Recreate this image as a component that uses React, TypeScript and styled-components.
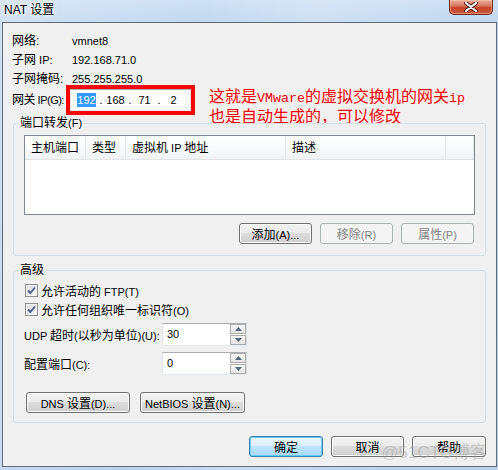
import React from "react";
import styled, { createGlobalStyle, css } from "styled-components";

const Global = createGlobalStyle`
  html, body { margin: 0; padding: 0; }
  body {
    font-family: "Liberation Sans", "Noto Sans CJK SC", sans-serif;
    font-size: 12px;
    color: #000;
    background: #fff;
  }
`;

/* ---------- window chrome ---------- */

const Frame = styled.div`
  width: 498px;
  height: 470px;
  box-sizing: border-box;
  padding: 0 1px 3px 2px;
  display: flex;
  flex-direction: column;
  overflow: hidden;
  background:
    linear-gradient(100deg, rgba(255,255,255,0.25) 0%, rgba(255,255,255,0) 35%, rgba(255,255,255,0.2) 55%, rgba(255,255,255,0) 80%),
    linear-gradient(180deg, #cfe0f3 0%, #c2d7ee 22px, #bcd3eb 100%);
`;

const TitleBar = styled.div`
  height: 22px;
  display: flex;
  justify-content: space-between;
  align-items: flex-start;
`;

const Title = styled.div`
  padding-left: 2px;
  line-height: 21px;
  font-size: 12px;
  font-family: "Liberation Sans", "Noto Sans CJK SC", sans-serif;
  text-shadow: 0 0 6px #fff, 0 0 3px #fff;
`;

const CloseButton = styled.div`
  width: 44px;
  height: 15px;
  box-sizing: border-box;
  margin-right: 4px;
  border: 1px solid #6e2d22;
  border-top: none;
  border-radius: 0 0 5px 5px;
  background: linear-gradient(180deg, #eab0a2 0%, #da7862 40%, #c6452c 55%, #cf5a3e 100%);
  box-shadow: inset 0 0 0 1px rgba(255, 200, 180, 0.45);
  display: flex;
  align-items: center;
  justify-content: center;
`;

const Client = styled.div`
  flex: 1;
  position: relative;
  display: flex;
  flex-direction: column;
  border: 1px solid #5f6b78;
  background: #f0f0f0;
`;

/* ---------- mixed latin / cjk text ---------- */

const Lat = styled.span`
  font-size: 11px;
`;

const MonoLat = styled.span`
  font-family: "Liberation Mono", monospace;
  font-size: 13.33px;
`;

function Mixed({ text, as: Latin = Lat }: { text: string; as?: typeof Lat }) {
  const parts = text.match(/[\x00-\x7f]+|[^\x00-\x7f]+/g) ?? [];
  return (
    <>
      {parts.map((p, i) =>
        /^[\x00-\x7f]/.test(p) ? <Latin key={i}>{p}</Latin> : <React.Fragment key={i}>{p}</React.Fragment>
      )}
    </>
  );
}

/* ---------- network info ---------- */

const InfoGrid = styled.div`
  display: grid;
  grid-template-columns: 54px 1fr;
  grid-template-rows: 19px 19px 15px 30px;
  padding: 9px 0 0 9px;
  align-items: start;
  line-height: 18px;
`;

const InfoLabel = styled.div<{ $center?: boolean }>`
  white-space: nowrap;
  ${(p) =>
    p.$center &&
    css`
      align-self: center;
      letter-spacing: -0.5px;
    `}
`;

const InfoValue = styled.div`
  padding-left: 6px;
  font-size: 11px;
`;

const GatewayCell = styled.div`
  display: flex;
  align-items: flex-start;
  gap: 14px;
`;

const RedFrame = styled.div`
  border: 4px solid #ff0000;
`;

const IpField = styled.div`
  width: 121px;
  height: 22px;
  box-sizing: border-box;
  background: #fff;
  border: 1px solid;
  border-color: #abadb3 #dbdfe6 #e3e9ef #e2e3ea;
  display: flex;
  align-items: center;
  padding-left: 4px;
  font-size: 11px;
`;

const Octet = styled.span`
  width: 23px;
  text-align: center;
`;

const Dot = styled.span`
  width: 6px;
  text-align: center;
`;

const Selected = styled.span`
  display: inline-block;
  background: #3399ff;
  color: #fff;
  line-height: 14px;
`;

const Note = styled.div`
  margin-top: 2px;
  color: #ff0000;
  font-family: "Noto Sans CJK SC", sans-serif;
  font-size: 16px;
  line-height: 16px;
  white-space: nowrap;
`;

/* ---------- group boxes ---------- */

const Group = styled.fieldset<{ $pad: string; $top?: number }>`
  margin: ${(p) => p.$top ?? 0}px 10px 0;
  padding: ${(p) => p.$pad};
  border: 1px solid #d5dfe5;
  border-radius: 3px;
  min-width: 0;
`;

const Legend = styled.legend`
  padding: 0 1px;
  margin-left: -5px;
  line-height: 16px;
`;

/* ---------- list view ---------- */

const ListView = styled.div`
  height: 80px;
  box-sizing: border-box;
  border: 1px solid #828790;
  background: #fff;
`;

const ListHeader = styled.div`
  display: flex;
  height: 24px;
  box-sizing: border-box;
  padding-top: 2px;
  background: linear-gradient(180deg, #ffffff 0%, #f9fafb 50%, #f2f3f5 100%);
  border-bottom: 1px solid #e3e4e6;
`;

const HeaderCell = styled.div<{ $w?: number }>`
  ${(p) => (p.$w ? css`width: ${p.$w}px;` : css`flex: 1;`)}
  box-sizing: border-box;
  padding-left: 6px;
  line-height: 21px;
  border-right: 1px solid #e5e5e5;
  margin-top: -2px;
  padding-top: 2px;
  white-space: nowrap;
`;

/* ---------- buttons ---------- */

const Button = styled.button<{ $w: number; $kind?: "default" | "disabled" }>`
  width: ${(p) => p.$w}px;
  height: 21px;
  box-sizing: border-box;
  padding: 0;
  font: inherit;
  color: #000;
  border: 1px solid #707070;
  border-radius: 3px;
  background: linear-gradient(180deg, #f2f2f2 0%, #ebebeb 49%, #dddddd 50%, #cfcfcf 100%);
  box-shadow: inset 0 0 0 1px #fbfbfb;
  white-space: nowrap;
  ${(p) =>
    p.$kind === "default" &&
    css`
      border-color: #3c7fb1;
      background: linear-gradient(180deg, #eaf6fd 0%, #d9f0fc 49%, #bee6fd 50%, #a7d9f5 100%);
      box-shadow: inset 0 0 0 1px #6ecbf5;
    `}
  ${(p) =>
    p.$kind === "disabled" &&
    css`
      color: #838383;
      border-color: #adb2b5;
      background: #f4f4f4;
      box-shadow: none;
    `}
`;

const ButtonRow = styled.div<{ $top: number; $gap: number; $end?: boolean; $padL?: number; $padR?: number }>`
  display: flex;
  gap: ${(p) => p.$gap}px;
  margin-top: ${(p) => p.$top}px;
  justify-content: ${(p) => (p.$end ? "flex-end" : "flex-start")};
  padding-left: ${(p) => p.$padL ?? 0}px;
  padding-right: ${(p) => p.$padR ?? 0}px;
`;

/* ---------- check boxes ---------- */

const CheckRow = styled.div`
  display: flex;
  align-items: center;
  height: 19px;
  padding-left: 1px;
  gap: 3px;
`;

const CheckBox = styled.span`
  width: 13px;
  height: 13px;
  box-sizing: border-box;
  border: 1px solid #8e8f8f;
  background: linear-gradient(135deg, #dcdcdc 0%, #f6f6f6 100%);
  box-shadow: inset 0 0 0 1px #f4f4f4;
  display: flex;
  align-items: center;
  justify-content: center;
`;

function Check({ label }: { label: string }) {
  return (
    <CheckRow>
      <CheckBox>
        <svg width="11" height="11" viewBox="0 0 11 11">
          <path d="M2 5.5 L4.3 8 L9 2.5" fill="none" stroke="#4b5f8d" strokeWidth="1.9" />
        </svg>
      </CheckBox>
      <span>
        <Mixed text={label} />
      </span>
    </CheckRow>
  );
}

/* ---------- spin boxes ---------- */

const SpinRow = styled.div<{ $top: number }>`
  display: flex;
  align-items: center;
  margin-top: ${(p) => p.$top}px;
`;

const SpinLabel = styled.div`
  width: 138px;
  white-space: nowrap;
`;

const SpinBox = styled.div`
  width: 85px;
  height: 23px;
  box-sizing: border-box;
  display: flex;
  background: #fff;
  border: 1px solid;
  border-color: #abadb3 #dbdfe6 #e3e9ef #e2e3ea;
`;

const SpinText = styled.div`
  flex: 1;
  padding-left: 4px;
  line-height: 21px;
  font-size: 11px;
`;

const SpinButtons = styled.div`
  width: 16px;
  display: flex;
  flex-direction: column;
  gap: 1px;
`;

const SpinArrow = styled.div`
  flex: 1;
  box-sizing: border-box;
  border: 1px solid #acacac;
  background: linear-gradient(180deg, #f6f6f6 0%, #e4e4e4 100%);
  display: flex;
  align-items: center;
  justify-content: center;
`;

function Spin({ label, value, top }: { label: string; value: string; top: number }) {
  return (
    <SpinRow $top={top}>
      <SpinLabel>
        <Mixed text={label} />
      </SpinLabel>
      <SpinBox>
        <SpinText>{value}</SpinText>
        <SpinButtons>
          <SpinArrow>
            <svg width="7" height="4" viewBox="0 0 7 4">
              <path d="M0 4 L3.5 0 L7 4 Z" fill="#54657e" />
            </svg>
          </SpinArrow>
          <SpinArrow>
            <svg width="7" height="4" viewBox="0 0 7 4">
              <path d="M0 0 L3.5 4 L7 0 Z" fill="#54657e" />
            </svg>
          </SpinArrow>
        </SpinButtons>
      </SpinBox>
    </SpinRow>
  );
}

/* ---------- watermark ---------- */

const Watermark = styled.div`
  position: absolute;
  right: 9px;
  bottom: 3px;
  font-family: "Liberation Sans", "Noto Sans CJK SC", sans-serif;
  font-size: 17px;
  color: rgba(150, 150, 150, 0.4);
  pointer-events: none;
  white-space: nowrap;
`;

export default function App() {
  return (
    <>
      <Global />
      <Frame>
        <TitleBar>
          <Title>NAT 设置</Title>
          <CloseButton>
            <svg width="14" height="10" viewBox="0 0 14 10">
              <path d="M2 1 L12 9 M12 1 L2 9" stroke="#4a1c14" strokeWidth="4" strokeLinecap="round" />
              <path d="M2 1 L12 9 M12 1 L2 9" stroke="#ffffff" strokeWidth="2.2" strokeLinecap="round" />
            </svg>
          </CloseButton>
        </TitleBar>

        <Client>
          <InfoGrid>
            <InfoLabel>网络:</InfoLabel>
            <InfoValue>vmnet8</InfoValue>
            <InfoLabel>
              <Mixed text="子网 IP:" />
            </InfoLabel>
            <InfoValue>192.168.71.0</InfoValue>
            <InfoLabel>子网掩码:</InfoLabel>
            <InfoValue>255.255.255.0</InfoValue>
            <InfoLabel $center>
              <Mixed text="网关 IP(G):" />
            </InfoLabel>
            <GatewayCell>
              <RedFrame>
                <IpField>
                  <Octet>
                    <Selected>192</Selected>
                  </Octet>
                  <Dot>.</Dot>
                  <Octet>168</Octet>
                  <Dot>.</Dot>
                  <Octet>71</Octet>
                  <Dot>.</Dot>
                  <Octet>2</Octet>
                </IpField>
              </RedFrame>
              <Note>
                <div>
                  <Mixed text="这就是VMware的虚拟交换机的网关ip" as={MonoLat} />
                </div>
                <div>也是自动生成的，可以修改</div>
              </Note>
            </GatewayCell>
          </InfoGrid>

          <Group $pad="4px 10px 11px">
            <Legend>
              <Mixed text="端口转发(F)" />
            </Legend>
            <ListView>
              <ListHeader>
                <HeaderCell $w={61}>主机端口</HeaderCell>
                <HeaderCell $w={40}>类型</HeaderCell>
                <HeaderCell $w={160}>
                  <Mixed text="虚拟机 IP 地址" />
                </HeaderCell>
                <HeaderCell $w={160}>描述</HeaderCell>
                <HeaderCell />
              </ListHeader>
            </ListView>
            <ButtonRow $top={8} $gap={8} $end $padR={1}>
              <Button $w={73}>
                <Mixed text="添加(A)..." />
              </Button>
              <Button $w={73} $kind="disabled">
                <Mixed text="移除(R)" />
              </Button>
              <Button $w={73} $kind="disabled">
                <Mixed text="属性(P)" />
              </Button>
            </ButtonRow>
          </Group>

          <Group $pad="3px 10px 9px" $top={6}>
            <Legend>高级</Legend>
            <Check label="允许活动的 FTP(T)" />
            <Check label="允许任何组织唯一标识符(O)" />
            <Spin label="UDP 超时(以秒为单位)(U):" value="30" top={4} />
            <Spin label="配置端口(C):" value="0" top={6} />
            <ButtonRow $top={17} $gap={10} $padL={2}>
              <Button $w={104}>
                <Mixed text="DNS 设置(D)..." />
              </Button>
              <Button $w={105}>
                <Mixed text="NetBIOS 设置(N)..." />
              </Button>
            </ButtonRow>
          </Group>

          <ButtonRow $top={13} $gap={8} $end $padR={10}>
            <Button $w={74} $kind="default">确定</Button>
            <Button $w={73}>取消</Button>
            <Button $w={74}>帮助</Button>
          </ButtonRow>

          <Watermark>@51CTO博客</Watermark>
        </Client>
      </Frame>
    </>
  );
}
